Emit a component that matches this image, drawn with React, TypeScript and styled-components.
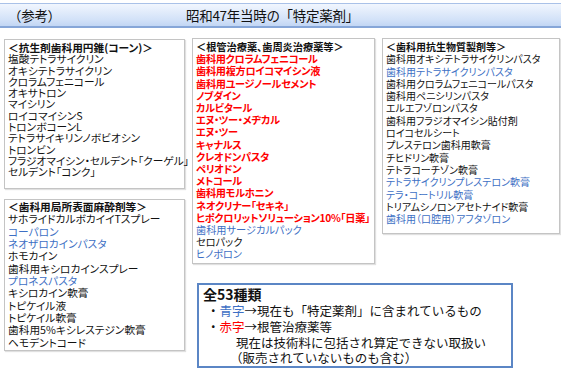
import styled, { createGlobalStyle } from "styled-components";

const GlobalStyle = createGlobalStyle`
  html, body {
    margin: 0;
    padding: 0;
    background: #ffffff;
  }
  body {
    font-family: "Noto Sans CJK JP", "Noto Sans", sans-serif;
    color: #111111;
  }
`;

const Page = styled.div`
  width: 561px;
  height: 376px;
  overflow: hidden;
  padding-top: 3px;
  box-sizing: border-box;
`;

const TitleBar = styled.div`
  display: flex;
  align-items: center;
  height: 22px;
  border-top: 1px solid #a9c1e8;
  border-bottom: 2px solid #86a6d8;
  background: linear-gradient(to bottom, #f1f6fe, #d3e2f8 70%, #c2d6f4);
  font-size: 13.5px;
  letter-spacing: -0.3px;
`;

const TitleNote = styled.span`
  width: 178px;
  padding-left: 8px;
`;

const TitleText = styled.span``;

const Content = styled.div`
  display: flex;
  gap: 7px;
  padding-left: 4px;
  margin-top: 11px;
`;

const Column = styled.div`
  display: flex;
  flex-direction: column;
  gap: 10px;
`;

const RightPart = styled.div`
  display: flex;
  flex-direction: column;
`;

const TopRow = styled.div`
  display: flex;
  align-items: flex-start;
  gap: 7px;
  margin-top: -1px;
`;

const ListBox = styled.div<{ $w: number; $h: number; $lh: number; $pt: number; $fs: number }>`
  width: ${(p) => p.$w}px;
  height: ${(p) => p.$h}px;
  box-sizing: border-box;
  border: 1px solid #c4c4c4;
  box-shadow: 1px 1px 1px rgba(0, 0, 0, 0.12);
  padding: ${(p) => p.$pt}px 0 0 3px;
  font-size: ${(p) => p.$fs}px;
  line-height: ${(p) => p.$lh}px;
  font-feature-settings: "palt";
  white-space: nowrap;
`;

const ListHead = styled.div`
  font-weight: 700;
`;

const Item = styled.div<{ $c?: "red" | "blue" }>`
  color: ${(p) => (p.$c === "red" ? "#ff0000" : p.$c === "blue" ? "#3d6fc4" : "#111111")};
  font-weight: ${(p) => (p.$c === "red" ? 700 : 400)};
  letter-spacing: ${(p) => (p.$c === "red" ? "-0.3px" : "0")};
`;

const Summary = styled.div`
  width: 316px;
  height: 85px;
  box-sizing: border-box;
  margin: 19px 0 0 5px;
  border: 2px solid #5b86c5;
  padding: 1px 0 0 4px;
  font-size: 12.5px;
  line-height: 15.8px;
  white-space: nowrap;
`;

const SummaryHead = styled.div`
  font-size: 14px;
  font-weight: 700;
  line-height: 17px;
`;

const SummaryLine = styled.div<{ $indent: number }>`
  padding-left: ${(p) => p.$indent}px;
`;

const Mark = styled.span<{ $c: "red" | "blue" }>`
  color: ${(p) => (p.$c === "red" ? "#ff0000" : "#3d6fc4")};
`;

type Entry = [string, ("red" | "blue")?];

const antibioticCones: Entry[] = [
  ["塩酸テトラサイクリン"],
  ["オキシテトラサイクリン"],
  ["クロラムフェニコール"],
  ["オキサトロン"],
  ["マイシリン"],
  ["ロイコマイシンS"],
  ["トロンボコーンL"],
  ["テトラサイキリンノボビオシン"],
  ["トロンビン"],
  ["フラジオマイシン・セルデント「クーゲル」"],
  ["セルデント「コンク」"],
];

const anesthetics: Entry[] = [
  ["サホライドカルボカイイTスプレー"],
  ["コーパロン", "blue"],
  ["ネオザロカインパスタ", "blue"],
  ["ホモカイン"],
  ["歯科用キシロカインスプレー"],
  ["プロネスパスタ", "blue"],
  ["キシロカイン軟膏"],
  ["トピケイル液"],
  ["トピケイル軟膏"],
  ["歯科用5%キシレステジン軟膏"],
  ["ヘモデントコード"],
];

const rootCanal: Entry[] = [
  ["歯科用クロラムフェニコール", "red"],
  ["歯科用複方ロイコマイシン液", "red"],
  ["歯科用ユージノールセメント", "red"],
  ["ノブダイン", "red"],
  ["カルビタール", "red"],
  ["エヌ・ツー・メヂカル", "red"],
  ["エヌ・ツー", "red"],
  ["キャナルス", "red"],
  ["クレオドンパスタ", "red"],
  ["ペリオドン", "red"],
  ["メトコール", "red"],
  ["歯科用モルホニン", "red"],
  ["ネオクリナー「セキネ」", "red"],
  ["ヒポクロリットソリューション10%「日薬」", "red"],
  ["歯科用サージカルパック", "blue"],
  ["セロパック"],
  ["ヒノポロン", "blue"],
];

const antibioticAgents: Entry[] = [
  ["歯科用オキシテトラサイクリンパスタ"],
  ["歯科用テトラサイクリンパスタ", "blue"],
  ["歯科用クロラムフェニコールパスタ"],
  ["歯科用ペニシリンパスタ"],
  ["エルエフゾロンパスタ"],
  ["歯科用フラジオマイシン貼付剤"],
  ["ロイコセルシート"],
  ["プレステロン歯科用軟膏"],
  ["チヒドリン軟膏"],
  ["テトラコーチゾン軟膏"],
  ["テトラサイクリンプレステロン軟膏", "blue"],
  ["テラ・コートリル軟膏", "blue"],
  ["トリアムシノロンアセトナイド軟膏"],
  ["歯科用（口腔用）アフタゾロン", "blue"],
];

function Items({ list }: { list: Entry[] }) {
  return (
    <>
      {list.map(([name, c]) => (
        <Item key={name} $c={c}>
          {name}
        </Item>
      ))}
    </>
  );
}

export default function App() {
  return (
    <Page>
      <GlobalStyle />
      <TitleBar>
        <TitleNote>（参考）</TitleNote>
        <TitleText>昭和47年当時の「特定薬剤」</TitleText>
      </TitleBar>
      <Content>
        <Column>
          <ListBox $w={181} $h={150} $lh={11.3} $pt={2} $fs={10.7}>
            <ListHead>＜抗生剤歯科用円錐(コーン)＞</ListHead>
            <Items list={antibioticCones} />
          </ListBox>
          <ListBox $w={181} $h={152} $lh={12.35} $pt={1} $fs={10.7}>
            <ListHead>＜歯科用局所表面麻酔剤等＞</ListHead>
            <Items list={anesthetics} />
          </ListBox>
        </Column>
        <RightPart>
          <TopRow>
            <ListBox $w={183} $h={226} $lh={12.2} $pt={2} $fs={10.2}>
              <ListHead>＜根管治療薬、歯周炎治療薬等＞</ListHead>
              <Items list={rootCanal} />
            </ListBox>
            <ListBox $w={178} $h={196} $lh={12.3} $pt={2} $fs={10}>
              <ListHead>＜歯科用抗生物質製剤等＞</ListHead>
              <Items list={antibioticAgents} />
            </ListBox>
          </TopRow>
          <Summary>
            <SummaryHead>全53種類</SummaryHead>
            <SummaryLine $indent={4}>
              ・<Mark $c="blue">青字</Mark>→現在も「特定薬剤」に含まれているもの
            </SummaryLine>
            <SummaryLine $indent={4}>
              ・<Mark $c="red">赤字</Mark>→根管治療薬等
            </SummaryLine>
            <SummaryLine $indent={33}>現在は技術料に包括され算定できない取扱い</SummaryLine>
            <SummaryLine $indent={27}>（販売されていないものも含む）</SummaryLine>
          </Summary>
        </RightPart>
      </Content>
    </Page>
  );
}
